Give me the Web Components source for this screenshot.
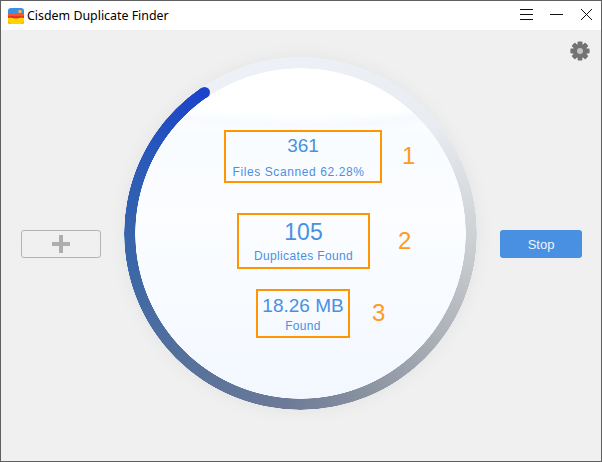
<!DOCTYPE html>
<html>
<head>
<meta charset="utf-8">
<title>Cisdem Duplicate Finder</title>
<style>
  html, body { margin: 0; padding: 0; }
  body { font-family: "Liberation Sans", Arial, sans-serif; }
</style>
</head>
<body>
<app-window>
  <title-bar slot="title">Cisdem Duplicate Finder</title-bar>
  <add-button></add-button>
  <scan-dial>
    <stat-box mark="1" value-size="19" label-spacing="0.6" label-shift="9" gap="8" pad="3" width="158" height="53" mark-left="176" mark-top="10"><span slot="value">361</span>Files Scanned 62.28%</stat-box>
    <stat-box mark="2" value-size="23" label-spacing="0.35" gap="4" pad="4" width="133" height="56" mark-left="159" mark-top="12" style="margin-top:30px;margin-left:1px"><span slot="value">105</span>Duplicates Found</stat-box>
    <stat-box mark="3" value-size="19" label-spacing="0.3" gap="2" pad="4" width="94" height="49" mark-left="114" mark-top="8" style="margin-top:20px"><span slot="value">18.26 MB</span>Found</stat-box>
  </scan-dial>
  <stop-button>Stop</stop-button>
</app-window>

<script>
// window frame: title bar on top, three columns under it
class AppWindow extends HTMLElement {
  constructor() {
    super();
    this.attachShadow({ mode: 'open' });
    this.shadowRoot.innerHTML = `
      <style>
        :host {
          display: flex;
          flex-direction: column;
          box-sizing: border-box;
          width: 602px;
          height: 462px;
          border: 1px solid #5f5f5f;
          background: #f0f0f0;
          overflow: hidden;
        }
        .main {
          position: relative;
          flex: 1;
          display: flex;
          justify-content: space-between;
          align-items: center;
          padding: 0 19px 3px 20px;
        }
        .gear { position: absolute; top: 11px; right: 11px; width: 20px; height: 20px; }
      </style>
      <slot name="title"></slot>
      <div class="main">
        <slot></slot>
        <svg class="gear" viewBox="0 0 20 20">
          <g fill="#737373">
            <rect x="7.6" y="0.4" width="4.8" height="19.2" rx="0.8"/>
            <rect x="7.6" y="0.4" width="4.8" height="19.2" rx="0.8" transform="rotate(45 10 10)"/>
            <rect x="7.6" y="0.4" width="4.8" height="19.2" rx="0.8" transform="rotate(90 10 10)"/>
            <rect x="7.6" y="0.4" width="4.8" height="19.2" rx="0.8" transform="rotate(135 10 10)"/>
          </g>
          <circle cx="10" cy="10" r="5" fill="none" stroke="#737373" stroke-width="4"/>
          <circle cx="10" cy="10" r="3" fill="#c4c4c4"/>
        </svg>
      </div>
    `;
  }
}

class TitleBar extends HTMLElement {
  constructor() {
    super();
    this.attachShadow({ mode: 'open' });
    this.shadowRoot.innerHTML = `
      <style>
        :host {
          display: flex;
          align-items: center;
          height: 29px;
          flex: none;
          background: #fff;
          padding: 0 8px 0 7px;
          font: 12.4px "Noto Sans", "Open Sans", sans-serif;
          color: #000;
        }
        .logo { width: 16px; height: 16px; margin-right: 3px; }
        .name { flex: 1; }
        .btns { display: flex; gap: 17px; margin-bottom: 2px; }
        .btns svg { width: 13px; height: 13px; display: block; }
      </style>
      <svg class="logo" viewBox="0 0 16 16">
        <defs><clipPath id="c"><rect width="16" height="16" rx="3"/></clipPath></defs>
        <g clip-path="url(#c)">
          <rect width="16" height="16" fill="#3b8fe6"/>
          <circle cx="12" cy="3.5" r="1.8" fill="#ffb52e"/>
          <path d="M0 5.5 C4 4 9 7 16 5 V16 H0Z" fill="#f0572b"/>
          <path d="M0 8 H16 V16 H0Z" fill="#e2332d"/>
          <path d="M0 10 C4 9 6 11 9 10.5 S13 9.5 16 10 V16 H0Z" fill="#ffd400"/>
        </g>
      </svg>
      <span class="name"><slot></slot></span>
      <div class="btns">
        <svg viewBox="0 0 13 13"><path d="M0 1.5H13M0 6.5H13M0 11.5H13" stroke="#111" fill="none"/></svg>
        <svg viewBox="0 0 13 13"><path d="M0 6.5H13" stroke="#111" fill="none"/></svg>
        <svg viewBox="0 0 13 13"><path d="M1 1L12 12M12 1L1 12" stroke="#111" fill="none"/></svg>
      </div>
    `;
  }
}

class AddButton extends HTMLElement {
  constructor() {
    super();
    this.attachShadow({ mode: 'open' });
    this.shadowRoot.innerHTML = `
      <style>
        :host {
          display: flex;
          align-items: center;
          justify-content: center;
          box-sizing: border-box;
          width: 80px;
          height: 28px;
          border: 1px solid #b4b4b4;
          border-radius: 3px;
        }
        svg { width: 18px; height: 18px; display: block; }
      </style>
      <svg viewBox="0 0 18 18"><path d="M7 0H11V7H18V11H11V18H7V11H0V7H7Z" fill="#aeaeae"/></svg>
    `;
  }
}

class StopButton extends HTMLElement {
  constructor() {
    super();
    this.attachShadow({ mode: 'open' });
    this.shadowRoot.innerHTML = `
      <style>
        :host {
          display: flex;
          align-items: center;
          justify-content: center;
          width: 82px;
          height: 28px;
          border-radius: 3px;
          background: #4a90e2;
          color: #eef4fc;
          font: 13px "Liberation Sans", Arial, sans-serif;
        }
      </style>
      <slot></slot>
    `;
  }
}

// the round dial. ring is a conic gradient cut with a radial mask
class ScanDial extends HTMLElement {
  constructor() {
    super();
    this.attachShadow({ mode: 'open' });
    this.shadowRoot.innerHTML = `
      <style>
        :host {
          display: block;
          position: relative;
          flex: none;
          width: 353px;
          height: 353px;
          margin-top: -21px;
          border-radius: 50%;
          box-shadow: 0 0 16px rgba(120, 125, 135, 0.1);
        }
        .disc {
          position: absolute;
          inset: 11px;
          border-radius: 50%;
          background: linear-gradient(#fff 0%, #fff 11%, #f9fcff 20%, #fbfdff 45%, #f3f8ff 100%);
          overflow: hidden;
        }
        .disc svg { position: absolute; left: 0; top: 0; width: 100%; height: 100%; filter: blur(2px); }
        .ring {
          position: absolute;
          inset: 0;
          border-radius: 50%;
          background: conic-gradient(from 0deg,
            #edf1f7 0deg, #e9ecf1 50deg, #cfd2d5 90deg, #a9aeb5 130deg, #87909f 160deg,
            #6c7a97 185deg, #54709c 225deg, #3a66a8 262deg, #2a5ab8 295deg, #1b43cc 325.5deg,
            #edf1f7 325.7deg, #edf1f7 360deg);
          -webkit-mask: radial-gradient(circle, transparent 165px, #000 165.5px, #000 176px, transparent 176.5px);
          mask: radial-gradient(circle, transparent 165px, #000 165.5px, #000 176px, transparent 176.5px);
        }
        .cap {
          position: absolute;
          left: 74.5px;
          top: 29.5px;
          width: 11px;
          height: 11px;
          border-radius: 50%;
          background: #1b43cc;
        }
        .stats {
          position: relative;
          display: flex;
          flex-direction: column;
          align-items: center;
          padding: 73px 0 0 5px;
        }
      </style>
      <div class="disc">
        <svg viewBox="0 0 331 331" preserveAspectRatio="none">
          <path d="M0 40 C60 50 120 54 170 54 S280 48 331 36 V44 C280 58 220 62 170 60 S60 56 0 50Z" fill="#f6f9fe"/>
        </svg>
      </div>
      <div class="ring"></div>
      <div class="cap"></div>
      <div class="stats"><slot></slot></div>
    `;
  }
}

class StatBox extends HTMLElement {
  constructor() {
    super();
    this.attachShadow({ mode: 'open' });
    const a = (n, d) => this.getAttribute(n) || d;
    this.shadowRoot.innerHTML = `
      <style>
        :host {
          display: flex;
          flex-direction: column;
          align-items: center;
          position: relative;
          box-sizing: border-box;
          width: ${a('width', 100)}px;
          height: ${a('height', 50)}px;
          padding-top: ${a('pad', 5)}px;
          border: 2px solid #ff9500;
          color: #4a90e2;
          white-space: nowrap;
        }
        .value { font-size: ${a('value-size', 19)}px; line-height: 1.15; }
        .label {
          font-size: 12px;
          line-height: 14px;
          margin-top: ${a('gap', 4)}px;
          margin-right: ${a('label-shift', 0)}px;
          letter-spacing: ${a('label-spacing', 0)}px;
        }
        .mark {
          position: absolute;
          left: ${a('mark-left', 0)}px;
          top: ${a('mark-top', 0)}px;
          font-size: 24px;
          line-height: 28px;
          color: #ff9a1e;
        }
      </style>
      <div class="value"><slot name="value"></slot></div>
      <div class="label"><slot></slot></div>
      <div class="mark">${a('mark', '')}</div>
    `;
  }
}

customElements.define('app-window', AppWindow);
customElements.define('title-bar', TitleBar);
customElements.define('add-button', AddButton);
customElements.define('stop-button', StopButton);
customElements.define('scan-dial', ScanDial);
customElements.define('stat-box', StatBox);
</script>
</body>
</html>
